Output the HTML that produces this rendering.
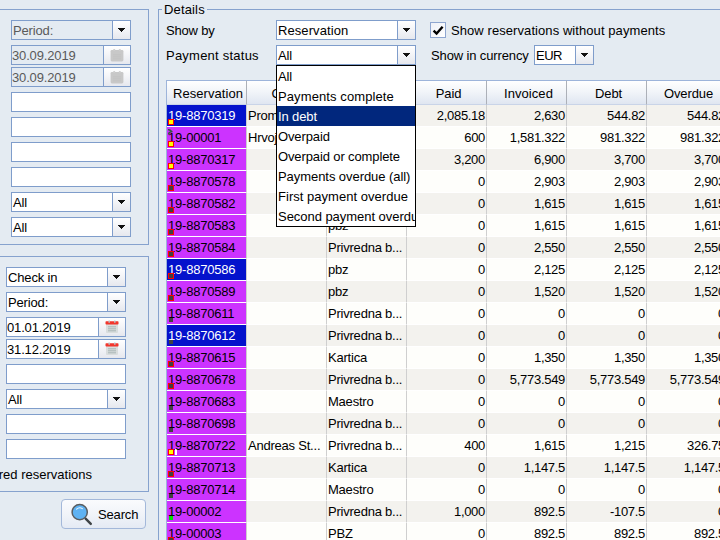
<!DOCTYPE html>
<html lang="en">
<head>
<meta charset="utf-8">
<title>Reservations payments</title>
<style>
html,body{margin:0;padding:0}
body{width:720px;height:540px;overflow:hidden;position:relative;background:#E4EBF2;font-family:"Liberation Sans",sans-serif;font-size:13px;color:#000}
div,span,i{box-sizing:border-box}
.panel{position:absolute;border:1px solid #86A2CE}
.fld{position:absolute;height:20px;border:1px solid #7F9DCB;background:#fff;line-height:18px;white-space:nowrap;overflow:hidden}
.fld.dis{background:#E4EBF2;color:#5a5a5a}
.fld .t{position:absolute;left:1px;top:1px;letter-spacing:-0.15px}
.fld .btn{position:absolute;right:0;top:0;height:18px;width:18px;border-left:1px solid #7F9DCB;background:linear-gradient(#ffffff,#f4f5f8 45%,#e6e8ee)}
.fld .btn.cal{width:27px}
.arr{position:absolute;left:5px;top:7px;width:7px;height:4px;background:linear-gradient(#111,#111) 0 0/7px 1px no-repeat,linear-gradient(#111,#111) 1px 1px/5px 1px no-repeat,linear-gradient(#111,#111) 2px 2px/3px 1px no-repeat,linear-gradient(#111,#111) 3px 3px/1px 1px no-repeat}
.lbl{position:absolute;white-space:nowrap;line-height:20px;height:20px}
.cali{position:absolute;left:6px;top:2px;width:14px;height:14px}
/* table */
.th{position:absolute;top:80px;height:25px;border-top:1px solid #9DB4DA;border-bottom:1px solid #C9D4E8;border-right:1px solid #ACB0B8;background:linear-gradient(#ffffff,#f2f5f9 45%,#dfe6f1);text-align:center;line-height:25px;white-space:nowrap;overflow:hidden;width:80px;padding-left:4px;letter-spacing:-0.12px}
.row{position:absolute;left:167px;width:600px;height:22px}
.c{position:absolute;top:0;height:22px;width:80px;line-height:21px;letter-spacing:-0.22px;white-space:nowrap;overflow:hidden;border-right:1px solid #CFCFCF;border-bottom:1px solid #fff;padding:0 1px 0 2px}
.row.o .c{background:#F3F2EE}
.row.e .c{background:#FEFEFB}
.c.n{text-align:right;letter-spacing:-0.3px}
.c1,.c2{padding-left:1px}
.c0{left:0}.c1{left:80px}.c2{left:160px}.c3{left:240px}.c4{left:320px}.c5{left:400px}.c6{left:480px}
.row .c.c0{padding-left:1px}
.row .c.c0.b{background:#0412CC;color:#fff}
.row .c.c0.m{background:#CC33FF;color:#000}
.c0 span{position:absolute;left:1px;top:0}
.mk{z-index:2;position:absolute;left:1px;top:14px;width:6px;height:6px}
.mk.yr{background:#FFFF00;border:1px solid #FF0000}
.mk.dr{background:#404040;border:1px solid #FF0000}
.mk.d{background:#404040;left:2px;top:15px;width:4px;height:4px}
.mk.g{background:#00E000;left:2px;top:15px;width:4px;height:4px}
.wb{position:absolute;left:8px;top:14px;width:2px;height:6px;background:#fff}
.ar{position:absolute;left:1px;top:2px;width:5px;height:6px;z-index:2;background:none}
/* dropdown */
.dd{position:absolute;left:276px;top:65px;width:140px;height:162px;border:1px solid #000;background:#fff;overflow:hidden}
.dd div{height:20px;line-height:22px;letter-spacing:-0.12px;padding-left:1px;white-space:nowrap;overflow:hidden}
.dd div.sel{background:#01277D;color:#fff}
.sbtn{position:absolute;left:61px;top:499px;width:85px;height:30px;border:1px solid #A3B8DA;border-radius:4px;background:linear-gradient(#fafbfd,#f1f4f9 50%,#e4eaf4)}
</style>
</head>
<body>
<!-- left panel 1 -->
<div class="panel" style="left:-10px;top:9px;width:159px;height:236px"></div>
<div class="fld dis" style="left:11px;top:20px;width:120px"><span class="t">Period:</span><span class="btn"><i class="arr"></i></span></div>
<div class="fld dis" style="left:11px;top:45px;width:120px"><span class="t" style="left:0px">30.09.2019</span><span class="btn cal"><svg class="cali" viewBox="0 0 14 14"><rect x="0.6" y="2" width="12.8" height="11.4" rx="1.3" fill="#c8c8c8"/><rect x="3.3" y="1" width="1.8" height="2" fill="#cfcfcf"/><rect x="8.9" y="1" width="1.8" height="2" fill="#cfcfcf"/><rect x="3" y="6.3" width="8" height="1" fill="#c2c2c2"/><rect x="3" y="8.3" width="8" height="1" fill="#c2c2c2"/><rect x="3" y="10.3" width="8" height="1" fill="#c2c2c2"/></svg></span></div>
<div class="fld dis" style="left:11px;top:67px;width:120px"><span class="t" style="left:0px">30.09.2019</span><span class="btn cal"><svg class="cali" viewBox="0 0 14 14"><rect x="0.6" y="2" width="12.8" height="11.4" rx="1.3" fill="#c8c8c8"/><rect x="3.3" y="1" width="1.8" height="2" fill="#cfcfcf"/><rect x="8.9" y="1" width="1.8" height="2" fill="#cfcfcf"/><rect x="3" y="6.3" width="8" height="1" fill="#c2c2c2"/><rect x="3" y="8.3" width="8" height="1" fill="#c2c2c2"/><rect x="3" y="10.3" width="8" height="1" fill="#c2c2c2"/></svg></span></div>
<div class="fld" style="left:11px;top:92px;width:120px"></div>
<div class="fld" style="left:11px;top:117px;width:120px"></div>
<div class="fld" style="left:11px;top:142px;width:120px"></div>
<div class="fld" style="left:11px;top:167px;width:120px"></div>
<div class="fld" style="left:11px;top:192px;width:120px"><span class="t">All</span><span class="btn"><i class="arr"></i></span></div>
<div class="fld" style="left:11px;top:217px;width:120px"><span class="t">All</span><span class="btn"><i class="arr"></i></span></div>
<!-- left panel 2 -->
<div class="panel" style="left:-10px;top:256px;width:159px;height:236px"></div>
<div class="fld" style="left:6px;top:267px;width:120px"><span class="t">Check in</span><span class="btn"><i class="arr"></i></span></div>
<div class="fld" style="left:6px;top:292px;width:120px"><span class="t">Period:</span><span class="btn"><i class="arr"></i></span></div>
<div class="fld" style="left:6px;top:317px;width:120px"><span class="t" style="left:0px">01.01.2019</span><span class="btn cal"><svg class="cali" viewBox="0 0 14 14"><rect x="1" y="3" width="12" height="10" rx="1" fill="#d9dddd"/><rect x="0.5" y="1.3" width="13" height="3.2" rx="0.8" fill="#f2362c"/><rect x="3.4" y="0.4" width="1.6" height="2.4" rx="0.5" fill="#b9bcc0"/><rect x="9" y="0.4" width="1.6" height="2.4" rx="0.5" fill="#b9bcc0"/><rect x="3" y="6.3" width="8" height="1" fill="#a9b5b5"/><rect x="3" y="8.3" width="8" height="1" fill="#a9b5b5"/><rect x="3" y="10.3" width="8" height="1" fill="#a9b5b5"/></svg></span></div>
<div class="fld" style="left:6px;top:339px;width:120px"><span class="t" style="left:0px">31.12.2019</span><span class="btn cal"><svg class="cali" viewBox="0 0 14 14"><rect x="1" y="3" width="12" height="10" rx="1" fill="#d9dddd"/><rect x="0.5" y="1.3" width="13" height="3.2" rx="0.8" fill="#f2362c"/><rect x="3.4" y="0.4" width="1.6" height="2.4" rx="0.5" fill="#b9bcc0"/><rect x="9" y="0.4" width="1.6" height="2.4" rx="0.5" fill="#b9bcc0"/><rect x="3" y="6.3" width="8" height="1" fill="#a9b5b5"/><rect x="3" y="8.3" width="8" height="1" fill="#a9b5b5"/><rect x="3" y="10.3" width="8" height="1" fill="#a9b5b5"/></svg></span></div>
<div class="fld" style="left:6px;top:364px;width:120px"></div>
<div class="fld" style="left:6px;top:389px;width:120px"><span class="t">All</span><span class="btn"><i class="arr"></i></span></div>
<div class="fld" style="left:6px;top:414px;width:120px"></div>
<div class="fld" style="left:6px;top:439px;width:120px"></div>
<div class="lbl" id="redres" style="right:628px;top:465px">Show only expired reservations</div>
<div class="sbtn"><svg style="position:absolute;left:8px;top:3px" width="24" height="24" viewBox="0 0 24 24"><line x1="15.6" y1="15.6" x2="20.8" y2="20.9" stroke="#3f4447" stroke-width="2.4" stroke-linecap="round"/><circle cx="9.7" cy="9.2" r="7.6" fill="#5fb2f2" stroke="#5a5d60" stroke-width="1.5"/><path d="M6.6 6.2 A4.6 4.6 0 0 1 12.4 5.6" fill="none" stroke="#e8f4fd" stroke-width="1.1" stroke-linecap="round"/></svg><span class="lbl" id="searchl" style="left:36px;top:5px;letter-spacing:-0.15px">Search</span></div>
<!-- details group -->
<div class="panel" style="left:158px;top:9px;width:600px;height:600px"></div>
<div class="lbl" id="details" style="left:162px;top:0px;letter-spacing:0.15px;padding:0 2px 0 2px;background:#E4EBF2">Details</div>
<div class="lbl" id="showby" style="left:166px;top:21px;letter-spacing:-0.18px">Show by</div>
<div class="lbl" id="paystat" style="left:166px;top:46px;letter-spacing:0.23px">Payment status</div>
<div class="fld" style="left:276px;top:20px;width:140px"><span class="t" style="letter-spacing:0.08px">Reservation</span><span class="btn"><i class="arr"></i></span></div>
<div class="fld" style="left:276px;top:45px;width:140px"><span class="t">All</span><span class="btn"><i class="arr"></i></span></div>
<div style="position:absolute;left:430px;top:22px;width:16px;height:16px;border:1px solid #8EA6D0;background:linear-gradient(135deg,#eef1f7,#ffffff)"><svg style="position:absolute;left:0;top:0" width="14" height="14" viewBox="0 0 14 14"><path d="M2.6 7.6 L5.6 10.6 L11.6 3.8" fill="none" stroke="#000" stroke-width="2.4"/></svg></div>
<div class="lbl" id="showres" style="left:451px;top:21px;letter-spacing:0.075px">Show reservations without payments</div>
<div class="lbl" id="showcur" style="left:431px;top:46px;letter-spacing:-0.13px">Show in currency</div>
<div class="fld" style="left:534px;top:45px;width:60px"><span class="t" style="letter-spacing:-0.5px">EUR</span><span class="btn"><i class="arr"></i></span></div>
<!-- table -->
<div style="position:absolute;left:166px;top:80px;width:1px;height:460px;background:#9DB4DA"></div>
<div class="th" style="left:167px;letter-spacing:0.06px;padding-left:3px">Reservation</div>
<div class="th" style="left:247px">Guest</div>
<div class="th" style="left:327px">Bank</div>
<div class="th" style="left:407px">Paid</div>
<div class="th" style="left:487px;letter-spacing:0.06px">Invoiced</div>
<div class="th" style="left:567px">Debt</div>
<div class="th" style="left:647px">Overdue</div>
<div class="row o" style="top:105px"><div class="c c0 b"><i class="mk yr"></i><span>19-8870319</span></div><div class="c c1">Prom</div><div class="c c2"></div><div class="c n c3">2,085.18</div><div class="c n c4">2,630</div><div class="c n c5">544.82</div><div class="c n c6">544.82</div></div>
<div class="row e" style="top:127px"><div class="c c0 m"><i class="mk yr"></i><svg class="ar" viewBox="0 0 5 6"><path d="M0.7 0.7 L1.6 0.9 L3.9 2.6 L1.4 3.4 L0.7 4.9" fill="none" stroke="#2f5b3c" stroke-width="1.5" stroke-linejoin="round" stroke-linecap="round"/></svg><span>19-00001</span></div><div class="c c1">Hrvoj</div><div class="c c2"></div><div class="c n c3">600</div><div class="c n c4">1,581.322</div><div class="c n c5">981.322</div><div class="c n c6">981.322</div></div>
<div class="row o" style="top:149px"><div class="c c0 m"><i class="mk yr"></i><span>19-8870317</span></div><div class="c c1"></div><div class="c c2"></div><div class="c n c3">3,200</div><div class="c n c4">6,900</div><div class="c n c5">3,700</div><div class="c n c6">3,700</div></div>
<div class="row e" style="top:171px"><div class="c c0 m"><i class="mk dr"></i><span>19-8870578</span></div><div class="c c1"></div><div class="c c2"></div><div class="c n c3">0</div><div class="c n c4">2,903</div><div class="c n c5">2,903</div><div class="c n c6">2,903</div></div>
<div class="row o" style="top:193px"><div class="c c0 m"><i class="mk dr"></i><span>19-8870582</span></div><div class="c c1"></div><div class="c c2"></div><div class="c n c3">0</div><div class="c n c4">1,615</div><div class="c n c5">1,615</div><div class="c n c6">1,615</div></div>
<div class="row e" style="top:215px"><div class="c c0 m"><i class="mk dr"></i><span>19-8870583</span></div><div class="c c1"></div><div class="c c2">pbz</div><div class="c n c3">0</div><div class="c n c4">1,615</div><div class="c n c5">1,615</div><div class="c n c6">1,615</div></div>
<div class="row o" style="top:237px"><div class="c c0 m"><i class="mk dr"></i><span>19-8870584</span></div><div class="c c1"></div><div class="c c2">Privredna b...</div><div class="c n c3">0</div><div class="c n c4">2,550</div><div class="c n c5">2,550</div><div class="c n c6">2,550</div></div>
<div class="row e" style="top:259px"><div class="c c0 b"><i class="mk dr"></i><span>19-8870586</span></div><div class="c c1"></div><div class="c c2">pbz</div><div class="c n c3">0</div><div class="c n c4">2,125</div><div class="c n c5">2,125</div><div class="c n c6">2,125</div></div>
<div class="row o" style="top:281px"><div class="c c0 m"><i class="mk dr"></i><span>19-8870589</span></div><div class="c c1"></div><div class="c c2">pbz</div><div class="c n c3">0</div><div class="c n c4">1,520</div><div class="c n c5">1,520</div><div class="c n c6">1,520</div></div>
<div class="row e" style="top:303px"><div class="c c0 m"><i class="mk d"></i><span>19-8870611</span></div><div class="c c1"></div><div class="c c2">Privredna b...</div><div class="c n c3">0</div><div class="c n c4">0</div><div class="c n c5">0</div><div class="c n c6">0</div></div>
<div class="row o" style="top:325px"><div class="c c0 b"><i class="mk d"></i><span>19-8870612</span></div><div class="c c1"></div><div class="c c2">Privredna b...</div><div class="c n c3">0</div><div class="c n c4">0</div><div class="c n c5">0</div><div class="c n c6">0</div></div>
<div class="row e" style="top:347px"><div class="c c0 m"><i class="mk dr"></i><span>19-8870615</span></div><div class="c c1"></div><div class="c c2">Kartica</div><div class="c n c3">0</div><div class="c n c4">1,350</div><div class="c n c5">1,350</div><div class="c n c6">1,350</div></div>
<div class="row o" style="top:369px"><div class="c c0 m"><i class="mk dr"></i><span>19-8870678</span></div><div class="c c1"></div><div class="c c2">Privredna b...</div><div class="c n c3">0</div><div class="c n c4">5,773.549</div><div class="c n c5">5,773.549</div><div class="c n c6">5,773.549</div></div>
<div class="row e" style="top:391px"><div class="c c0 m"><i class="mk d"></i><span>19-8870683</span></div><div class="c c1"></div><div class="c c2">Maestro</div><div class="c n c3">0</div><div class="c n c4">0</div><div class="c n c5">0</div><div class="c n c6">0</div></div>
<div class="row o" style="top:413px"><div class="c c0 m"><i class="mk d"></i><span>19-8870698</span></div><div class="c c1"></div><div class="c c2">Privredna b...</div><div class="c n c3">0</div><div class="c n c4">0</div><div class="c n c5">0</div><div class="c n c6">0</div></div>
<div class="row e" style="top:435px"><div class="c c0 m"><i class="mk yr"></i><i class="wb"></i><span>19-8870722</span></div><div class="c c1">Andreas St...</div><div class="c c2">Privredna b...</div><div class="c n c3">400</div><div class="c n c4">1,615</div><div class="c n c5">1,215</div><div class="c n c6">326.75</div></div>
<div class="row o" style="top:457px"><div class="c c0 m"><i class="mk dr"></i><span>19-8870713</span></div><div class="c c1"></div><div class="c c2">Kartica</div><div class="c n c3">0</div><div class="c n c4">1,147.5</div><div class="c n c5">1,147.5</div><div class="c n c6">1,147.5</div></div>
<div class="row e" style="top:479px"><div class="c c0 m"><i class="mk d"></i><span>19-8870714</span></div><div class="c c1"></div><div class="c c2">Maestro</div><div class="c n c3">0</div><div class="c n c4">0</div><div class="c n c5">0</div><div class="c n c6">0</div></div>
<div class="row o" style="top:501px"><div class="c c0 m"><i class="mk g"></i><span>19-00002</span></div><div class="c c1"></div><div class="c c2">Privredna b...</div><div class="c n c3">1,000</div><div class="c n c4">892.5</div><div class="c n c5">-107.5</div><div class="c n c6">0</div></div>
<div class="row e" style="top:523px"><div class="c c0 m"><i class="mk dr"></i><span>19-00003</span></div><div class="c c1"></div><div class="c c2">PBZ</div><div class="c n c3">0</div><div class="c n c4">892.5</div><div class="c n c5">892.5</div><div class="c n c6">892.5</div></div><!-- dropdown list -->
<div class="dd"><div>All</div><div style="letter-spacing:0.1px">Payments complete</div><div class="sel">In debt</div><div>Overpaid</div><div>Overpaid or complete</div><div style="letter-spacing:-0.06px">Payments overdue (all)</div><div style="letter-spacing:0.03px">First payment overdue</div><div style="letter-spacing:-0.04px">Second payment overdue</div></div>
</body>
</html>
